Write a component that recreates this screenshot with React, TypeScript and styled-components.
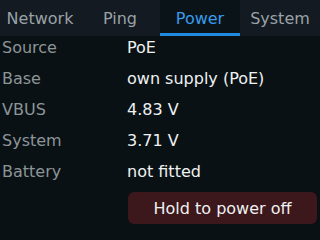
import styled, { createGlobalStyle } from "styled-components";

const Global = createGlobalStyle`
  html, body {
    margin: 0;
    padding: 0;
    background: #0a1114;
  }
  body {
    font-family: "DejaVu Sans", "Noto Sans", sans-serif;
  }
`;

const Screen = styled.div`
  width: 320px;
  height: 240px;
  display: flex;
  flex-direction: column;
  background: #0a1114;
  overflow: hidden;
`;

const TabBar = styled.div`
  display: grid;
  grid-template-columns: repeat(4, 80px);
  height: 36px;
  background: #131a21;
`;

const Tab = styled.div<{ $active?: boolean }>`
  display: flex;
  align-items: center;
  justify-content: center;
  font-size: 16px;
  color: ${(p) => (p.$active ? "#3a9aea" : "#9aa2a7")};
  background: ${(p) => (p.$active ? "#0a1418" : "transparent")};
  border-bottom: 3px solid ${(p) => (p.$active ? "#2188e0" : "transparent")};
  box-sizing: border-box;
  padding-top: 3px;
`;

const Rows = styled.div`
  display: flex;
  flex-direction: column;
`;

const Row = styled.div`
  display: grid;
  grid-template-columns: 125px 1fr;
  height: 31px;
  box-sizing: border-box;
  align-items: start;
  padding: 2px 0 0 2px;
  font-size: 16px;
  line-height: 19px;
`;

const Label = styled.span`
  color: #8c9598;
`;

const Value = styled.span`
  color: #eef1f2;
`;

const Actions = styled.div`
  display: flex;
  justify-content: flex-end;
  padding: 1px 3px 0 0;
`;

const PowerButton = styled.button`
  width: 189px;
  height: 32px;
  border: none;
  border-radius: 6px;
  background: #3c171b;
  color: #eef1f2;
  font-family: inherit;
  font-size: 16px;
  cursor: pointer;
`;

const tabs = ["Network", "Ping", "Power", "System"];

const rows: [string, string][] = [
  ["Source", "PoE"],
  ["Base", "own supply (PoE)"],
  ["VBUS", "4.83 V"],
  ["System", "3.71 V"],
  ["Battery", "not fitted"],
];

export default function App() {
  return (
    <Screen>
      <Global />
      <TabBar>
        {tabs.map((t) => (
          <Tab key={t} $active={t === "Power"}>
            {t}
          </Tab>
        ))}
      </TabBar>
      <Rows>
        {rows.map(([k, v]) => (
          <Row key={k}>
            <Label>{k}</Label>
            <Value>{v}</Value>
          </Row>
        ))}
      </Rows>
      <Actions>
        <PowerButton>Hold to power off</PowerButton>
      </Actions>
    </Screen>
  );
}
